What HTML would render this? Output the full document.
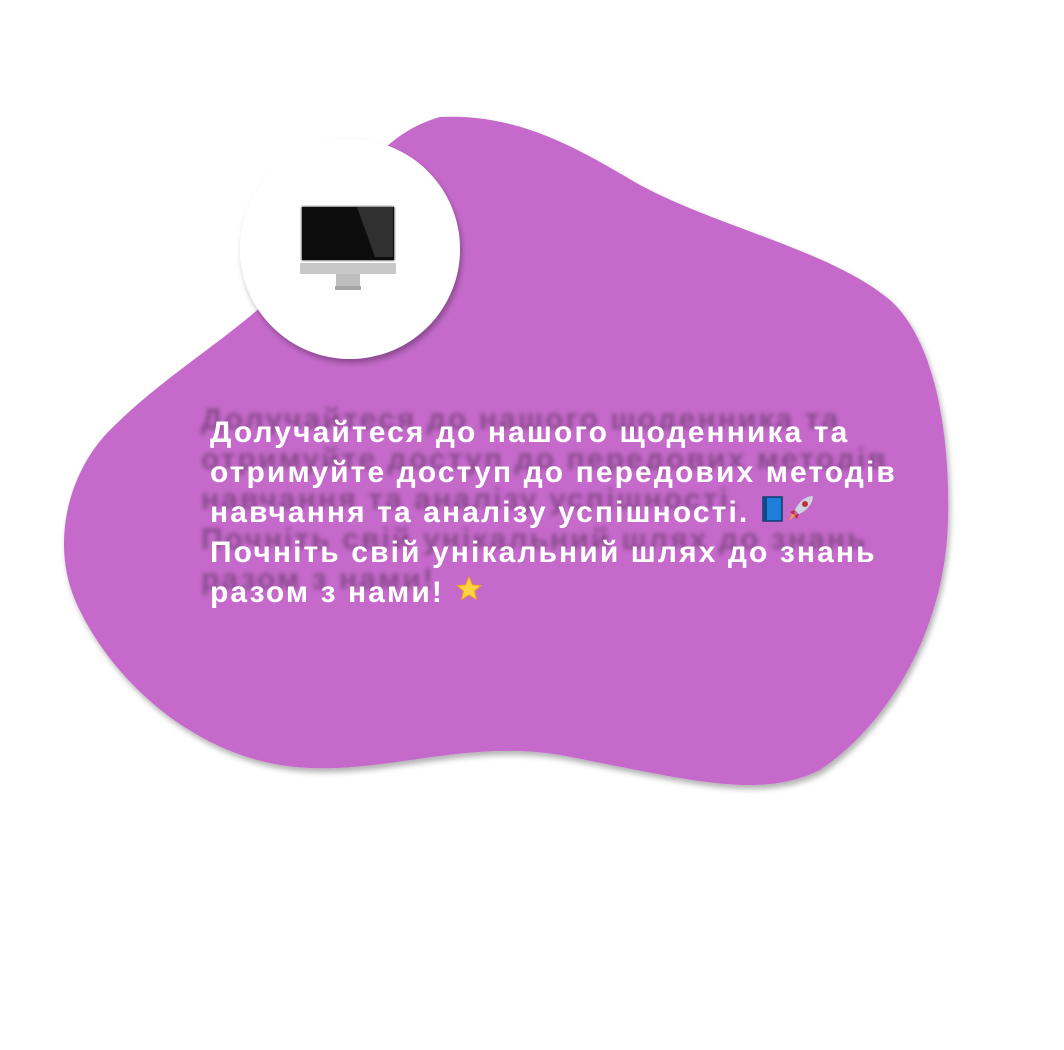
<!DOCTYPE html>
<html><head><meta charset="utf-8"><style>
html,body{margin:0;padding:0;background:#fff;width:1064px;height:1050px;overflow:hidden;position:relative}
.txt{position:absolute;left:210px;top:413px;width:800px;white-space:nowrap;font-family:"Liberation Sans","DejaVu Sans",sans-serif;font-weight:bold;font-size:30px;line-height:40px;color:#fff;text-shadow:-9px -13px 4px rgba(40,20,40,0.38);letter-spacing:2.1px}
.e{display:inline-block;height:20px;vertical-align:-1px;line-height:0}
.e svg{margin-top:-4px}
</style></head><body>
<svg width="1064" height="1050" style="position:absolute;left:0;top:0">
<defs><filter id="sh" x="-20%" y="-20%" width="140%" height="140%"><feDropShadow dx="2" dy="4" stdDeviation="3" flood-color="#000" flood-opacity="0.3"/></filter></defs>
<path d="M440 117 C520 113 580 150 640 185 C720 228 830 250 890 300 C940 345 950 450 948 520 C945 640 880 730 820 770 C760 800 690 780 560 755 C460 738 370 780 280 765 C190 750 110 680 75 600 C50 540 70 470 110 430 C170 370 230 340 290 280 C340 220 360 140 440 117 Z" fill="#C56BCB" filter="url(#sh)"/>
<circle cx="350" cy="249" r="110" fill="#fff" filter="url(#sh)"/>
<g>
<rect x="301" y="206" width="94" height="55" rx="2" fill="#0d0d0d" stroke="#d0d0d0" stroke-width="1.5"/>
<path d="M357 207 L393 207 L393 257 L375 257 Z" fill="#3a3a3a" opacity="0.8"/>
<rect x="300" y="263" width="96" height="11" rx="1" fill="#c8c8c8"/>
<rect x="336" y="274" width="24" height="12" fill="#bdbdbd"/>
<rect x="335" y="286" width="26" height="4" fill="#a5a5a5"/>
</g>
</svg>
<div class="txt">Долучайтеся до нашого щоденника та<br>отримуйте доступ до передових методів<br>навчання та аналізу успішності. <span class="e"><svg width="26" height="28"><rect x="3" y="2" width="19" height="24" fill="#1f7ed8" stroke="#0d3c6e" stroke-width="1.5"/><rect x="3" y="2" width="4" height="24" fill="#0e4a87"/></svg><svg width="30" height="30"><path d="M26 3 C18 4 12 10 9 17 L13 21 C20 18 26 12 27 4 Z" fill="#ccd4e0"/><circle cx="19" cy="11" r="3" fill="#c0303a"/><path d="M9 17 L4 19 L8 22 Z M13 21 L11 26 L8 22 Z" fill="#c0303a"/><path d="M9 22 L3 28 L6 21 Z" fill="#f5a623"/></svg></span><br>Почніть свій унікальний шлях до знань<br>разом з нами! <span class="e"><svg width="30" height="30"><path d="M15 4 L18.5 12 L27 12.5 L20.5 18 L22.5 26.5 L15 22 L7.5 26.5 L9.5 18 L3 12.5 L11.5 12 Z" fill="#ffd23f" stroke="#f0a020" stroke-width="1"/></svg></span></div>
</body></html>
